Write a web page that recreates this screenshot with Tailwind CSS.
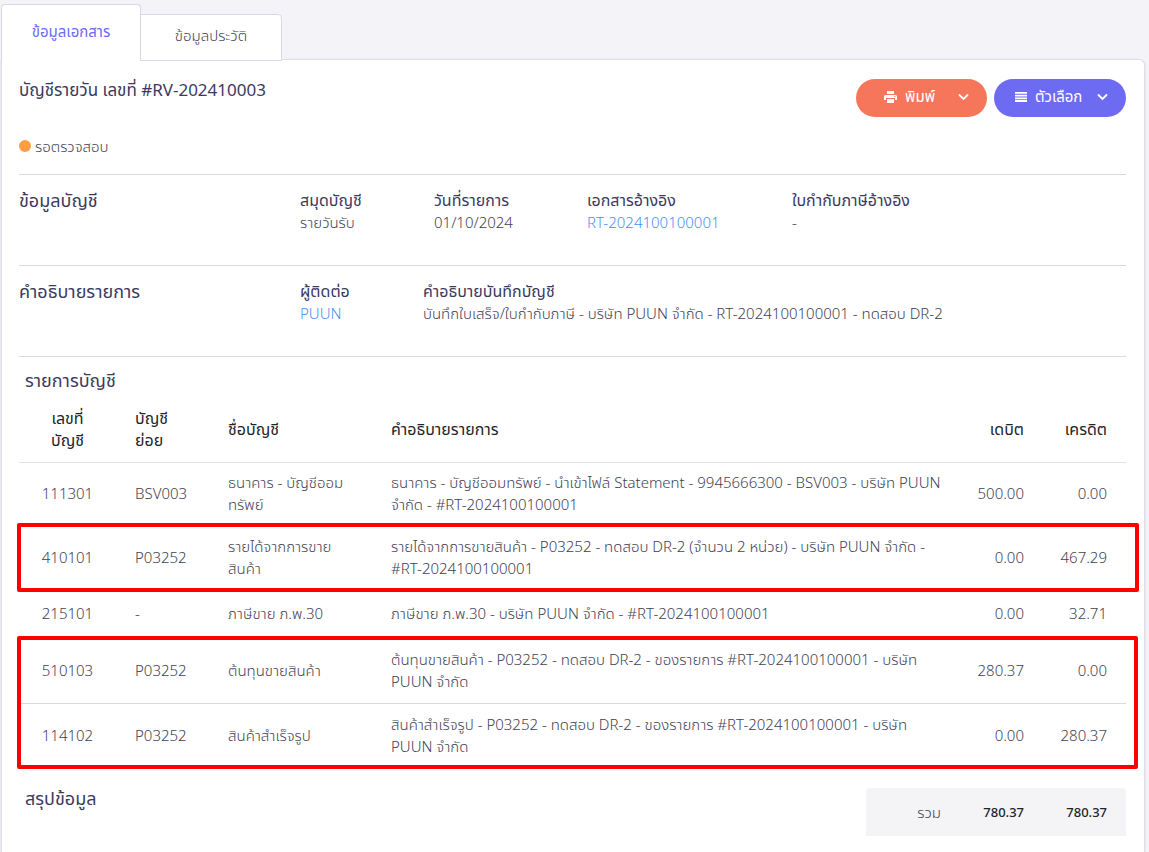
<!DOCTYPE html>
<html lang="th">
<head>
    <meta charset="UTF-8">
    <meta name="viewport" content="width=device-width, initial-scale=1.0">
    <title>บัญชีรายวัน #RV-202410003</title>
    <script src="https://cdn.jsdelivr.net/npm/@tailwindcss/browser@4"></script>
</head>
<body class="bg-[#f3f3f8] min-h-screen flex flex-col pt-1 pl-px pr-1 font-['Noto_Sans','Noto_Sans_Thai',sans-serif] font-light text-[15px] leading-[22px] text-[#3f4254]">
    <!-- Tabs -->
    <nav class="flex items-end">
        <a href="#document" class="relative z-10 -mb-0.5 w-[140px] h-[57px] pb-1 flex items-center justify-center bg-white border border-b-0 border-[#d9d8e6] rounded-t text-[#6e6bf3] font-normal">ข้อมูลเอกสาร</a>
        <a href="#history" class="relative z-10 -mb-0.5 -ml-px w-[142px] h-[47px] pb-1.5 flex items-center justify-center bg-white border border-[#d9d8e6] rounded-tr">ข้อมูลประวัติ</a>
    </nav>

    <main class="grow bg-white border border-b-0 border-[#dfdee8] rounded-tr-md shadow px-[18px] pl-[17px] pt-[19px] pb-4">
        <!-- Header -->
        <header class="flex items-start justify-between">
            <div>
                <h1 class="text-[17px] font-normal text-[#3b3a5e]">บัญชีรายวัน เลขที่ #RV-202410003</h1>
                <p class="mt-[34px] flex items-center gap-1"><span class="size-3 rounded-full bg-[#ff9f43]"></span>รอตรวจสอบ</p>
            </div>
            <div class="flex gap-[7px] text-white">
                <button type="button" class="w-[131px] h-[38px] pl-7 pr-4 pb-0.5 flex items-center rounded-full bg-[#f5765a]">
                    <svg class="w-[13px] h-3" viewBox="0 0 13 12" fill="currentColor"><path d="M3 0h7v3H3z"/><path fill-rule="evenodd" d="M1.500 4h10A1.500 1.500 0 0 1 13 5.500V9h-2V7H2v2H0V5.500A1.500 1.500 0 0 1 1.500 4zM10.500 5v1h1V5z"/><path d="M3 8h7v4H3z"/></svg>
                    <span class="ml-2 pb-0.5 font-normal">พิมพ์</span>
                    <svg class="ml-auto w-[14px] h-3" viewBox="0 0 14 12" fill="none" stroke="currentColor" stroke-width="1.800" stroke-linecap="round"><path d="M2.500 4 6.500 8 10.500 4"/></svg>
                </button>
                <button type="button" class="w-[132px] h-[38px] pl-[21px] pr-4 pb-0.5 flex items-center rounded-full bg-[#6e6bf3]">
                    <svg class="w-3 h-[10px]" viewBox="0 0 12 10" fill="currentColor"><path d="M0 0h12v1.800H0zM0 2.700h12v1.800H0zM0 5.400h12v1.800H0zM0 8.100h12v1.800H0z"/></svg>
                    <span class="ml-2 pb-0.5 font-normal">ตัวเลือก</span>
                    <svg class="ml-auto w-[14px] h-3" viewBox="0 0 14 12" fill="none" stroke="currentColor" stroke-width="1.800" stroke-linecap="round"><path d="M2.500 4 6.500 8 10.500 4"/></svg>
                </button>
            </div>
        </header>

        <!-- Account info -->
        <section class="mt-[17px] h-[91px] pt-[14px] border-t border-[#d9d8e6] flex">
            <h2 class="w-[281px] text-[18px] font-normal text-[#3b3a5e]">ข้อมูลบัญชี</h2>
            <dl class="grow grid grid-cols-[134px_153px_205px_1fr]">
                <div><dt class="text-[16px] font-normal text-[#3b3a5e]">สมุดบัญชี</dt><dd>รายวันรับ</dd></div>
                <div><dt class="text-[16px] font-normal text-[#3b3a5e]">วันที่รายการ</dt><dd>01/10/2024</dd></div>
                <div><dt class="text-[16px] font-normal text-[#3b3a5e]">เอกสารอ้างอิง</dt><dd><a href="#reference" class="text-[#4a8ffb]">RT-2024100100001</a></dd></div>
                <div><dt class="text-[16px] font-normal text-[#3b3a5e]">ใบกำกับภาษีอ้างอิง</dt><dd>-</dd></div>
            </dl>
        </section>

        <!-- Description -->
        <section class="h-[91px] pt-[14px] border-t border-[#d9d8e6] flex">
            <h2 class="w-[281px] text-[18px] font-normal text-[#3b3a5e]">คำอธิบายรายการ</h2>
            <dl class="grow grid grid-cols-[123px_1fr]">
                <div><dt class="text-[16px] font-normal text-[#3b3a5e]">ผู้ติดต่อ</dt><dd><a href="#contact" class="text-[#4a8ffb]">PUUN</a></dd></div>
                <div><dt class="text-[16px] font-normal text-[#3b3a5e]">คำอธิบายบันทึกบัญชี</dt><dd>บันทึกใบเสร็จ/ใบกำกับภาษี - บริษัท PUUN จำกัด - RT-2024100100001 - ทดสอบ DR-2</dd></div>
            </dl>
        </section>

        <!-- Entries -->
        <section class="border-t border-[#d9d8e6] pt-3">
            <h2 class="pl-1.5 text-[18px] font-normal text-[#3b3a5e]">รายการบัญชี</h2>
            <table class="mt-1.5 w-full table-fixed border-collapse whitespace-nowrap">
                <colgroup>
                    <col class="w-[97px]"><col class="w-[93px]"><col class="w-[163px]"><col><col class="w-[83px]"><col class="w-[83px]">
                </colgroup>
                <thead class="text-[16px] text-[#212529]">
                    <tr class="h-[65px] border-b border-[#dee2e6] text-left">
                        <th class="font-normal text-center">เลขที่<br>บัญชี</th>
                        <th class="pl-[19px] font-normal">บัญชี<br>ย่อย</th>
                        <th class="pl-[19px] font-normal">ชื่อบัญชี</th>
                        <th class="pl-[19px] font-normal">คำอธิบายรายการ</th>
                        <th class="pr-[19px] font-normal text-right">เดบิต</th>
                        <th class="pr-[19px] font-normal text-right">เครดิต</th>
                    </tr>
                </thead>
                <tbody class="[&_td]:pb-0.5">
                    <tr class="h-16 border-b border-[#d9d8e6]">
                        <td class="text-center">111301</td>
                        <td class="pl-[19px]">BSV003</td>
                        <td class="pl-[19px]">ธนาคาร - บัญชีออม<br>ทรัพย์</td>
                        <td class="pl-[19px]">ธนาคาร - บัญชีออมทรัพย์ - นำเข้าไฟล์ Statement - 9945666300 - BSV003 - บริษัท PUUN<br>จำกัด - #RT-2024100100001</td>
                        <td class="pr-[19px] text-right">500.00</td>
                        <td class="pr-[19px] text-right">0.00</td>
                    </tr>
                </tbody>
                <tbody class="[&_td]:pb-0.5 relative after:absolute after:-top-[3px] after:-bottom-px after:-left-0.5 after:-right-[13px] after:border-4 after:border-[#ff0000] after:rounded-xs">
                    <tr class="h-16 border-b border-[#d9d8e6]">
                        <td class="text-center">410101</td>
                        <td class="pl-[19px]">P03252</td>
                        <td class="pl-[19px]">รายได้จากการขาย<br>สินค้า</td>
                        <td class="pl-[19px]">รายได้จากการขายสินค้า - P03252 - ทดสอบ DR-2 (จำนวน 2 หน่วย) - บริษัท PUUN จำกัด -<br>#RT-2024100100001</td>
                        <td class="pr-[19px] text-right">0.00</td>
                        <td class="pr-[19px] text-right">467.29</td>
                    </tr>
                </tbody>
                <tbody class="[&_td]:pb-0.5">
                    <tr class="h-12 border-b border-[#d9d8e6]">
                        <td class="text-center">215101</td>
                        <td class="pl-[19px]">-</td>
                        <td class="pl-[19px]">ภาษีขาย ภ.พ.30</td>
                        <td class="pl-[19px]">ภาษีขาย ภ.พ.30 - บริษัท PUUN จำกัด - #RT-2024100100001</td>
                        <td class="pr-[19px] text-right">0.00</td>
                        <td class="pr-[19px] text-right">32.71</td>
                    </tr>
                </tbody>
                <tbody class="[&_td]:pb-0.5 relative after:absolute after:-top-[3px] after:-bottom-px after:-left-0.5 after:-right-3 after:border-4 after:border-[#ff0000] after:rounded-xs">
                    <tr class="h-[65px] border-b border-[#d9d8e6]">
                        <td class="text-center">510103</td>
                        <td class="pl-[19px]">P03252</td>
                        <td class="pl-[19px]">ต้นทุนขายสินค้า</td>
                        <td class="pl-[19px]">ต้นทุนขายสินค้า - P03252 - ทดสอบ DR-2 - ของรายการ #RT-2024100100001 - บริษัท<br>PUUN จำกัด</td>
                        <td class="pr-[19px] text-right">280.37</td>
                        <td class="pr-[19px] text-right">0.00</td>
                    </tr>
                    <tr class="h-16">
                        <td class="text-center">114102</td>
                        <td class="pl-[19px]">P03252</td>
                        <td class="pl-[19px]">สินค้าสำเร็จรูป</td>
                        <td class="pl-[19px]">สินค้าสำเร็จรูป - P03252 - ทดสอบ DR-2 - ของรายการ #RT-2024100100001 - บริษัท<br>PUUN จำกัด</td>
                        <td class="pr-[19px] text-right">0.00</td>
                        <td class="pr-[19px] text-right">280.37</td>
                    </tr>
                </tbody>
            </table>
        </section>

        <!-- Summary -->
        <section class="mt-5 flex justify-between">
            <h2 class="pl-1.5 text-[18px] leading-5 font-normal text-[#3b3a5e]">สรุปข้อมูล</h2>
            <table class="w-[260px] h-12 table-fixed bg-[#f4f4f7] rounded-t text-right">
                <tbody>
                    <tr>
                        <th class="w-[94px] pr-[19px] font-light">รวม</th>
                        <td class="w-[83px] pr-[19px] text-[13px] font-medium text-[#212529]">780.37</td>
                        <td class="w-[83px] pr-[19px] text-[13px] font-medium text-[#212529]">780.37</td>
                    </tr>
                </tbody>
            </table>
        </section>
    </main>
</body>
</html>
